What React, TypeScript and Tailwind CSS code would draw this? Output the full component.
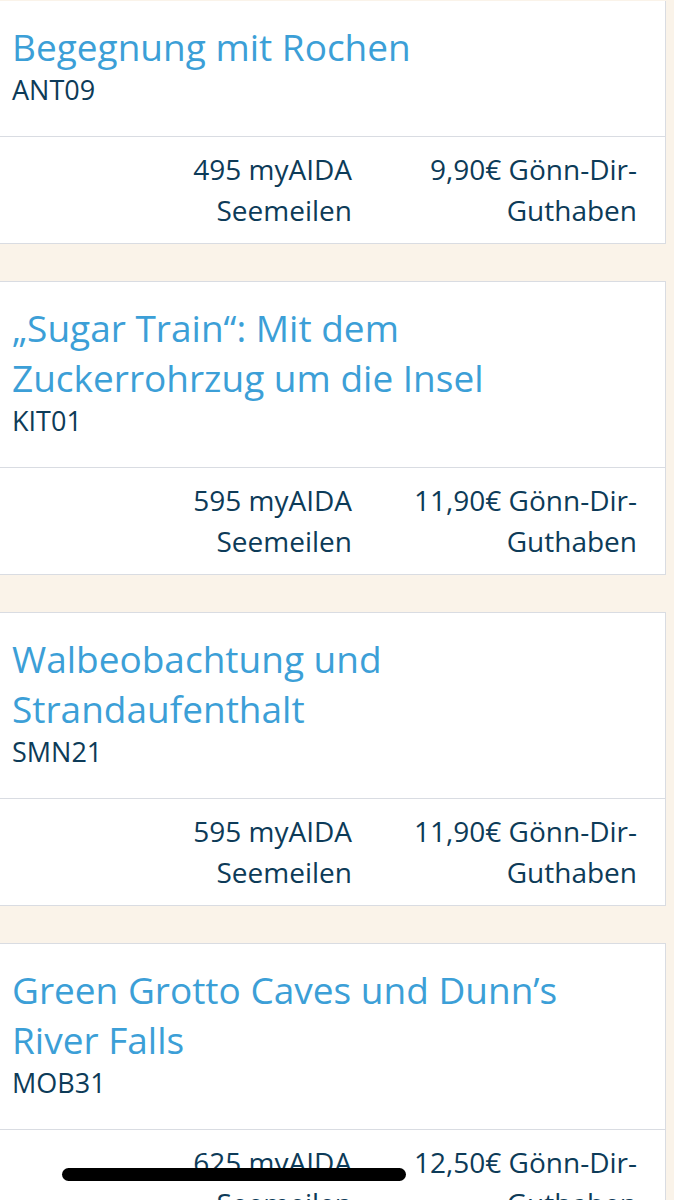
import React from "react";

type Excursion = {
  title: string;
  code: string;
  miles: string;
  credit: string;
};

const excursions: Excursion[] = [
  { title: "Begegnung mit Rochen", code: "ANT09", miles: "495", credit: "9,90€" },
  { title: "„Sugar Train“: Mit dem Zuckerrohrzug um die Insel", code: "KIT01", miles: "595", credit: "11,90€" },
  { title: "Walbeobachtung und Strandaufenthalt", code: "SMN21", miles: "595", credit: "11,90€" },
  { title: "Green Grotto Caves und Dunn’s River Falls", code: "MOB31", miles: "625", credit: "12,50€" },
];

function ExcursionCard({ item, first }: { item: Excursion; first?: boolean }) {
  return (
    <div
      className={
        "bg-white border border-l-0 border-[#d9dce2] mr-[8px] " +
        (first ? "mt-[1px] border-t-0" : "mt-[37px]")
      }
    >
      <div className="pl-[12px] pr-[24px] pt-[21px] pb-[28px] border-b border-[#d9dce2]">
        <h2 className="text-[37px] leading-[50px] text-[#3c9fd7] max-w-[580px]">{item.title}</h2>
        <div className="text-[27px] leading-[36px] text-[#0d3b58]">{item.code}</div>
      </div>
      <div className="flex justify-end text-[28px] leading-[41px] text-[#0d3b58] pt-[12px] pb-[12px]">
        <div className="w-[285px] pr-[28px] text-right">{item.miles} myAIDA Seemeilen</div>
        <div className="w-[285px] pr-[28px] text-right">{item.credit} Gönn-Dir-Guthaben</div>
      </div>
    </div>
  );
}

export default function App() {
  return (
    <div
      className="relative h-[1200px] overflow-hidden bg-[#faf3e9]"
      style={{ fontFamily: '"Open Sans", "Noto Sans", sans-serif' }}
    >
      {excursions.map((item, i) => (
        <ExcursionCard key={item.code} item={item} first={i === 0} />
      ))}
      {/* home indicator */}
      <div className="absolute left-[62px] top-[1168px] w-[344px] h-[13px] rounded-full bg-black" />
    </div>
  );
}
